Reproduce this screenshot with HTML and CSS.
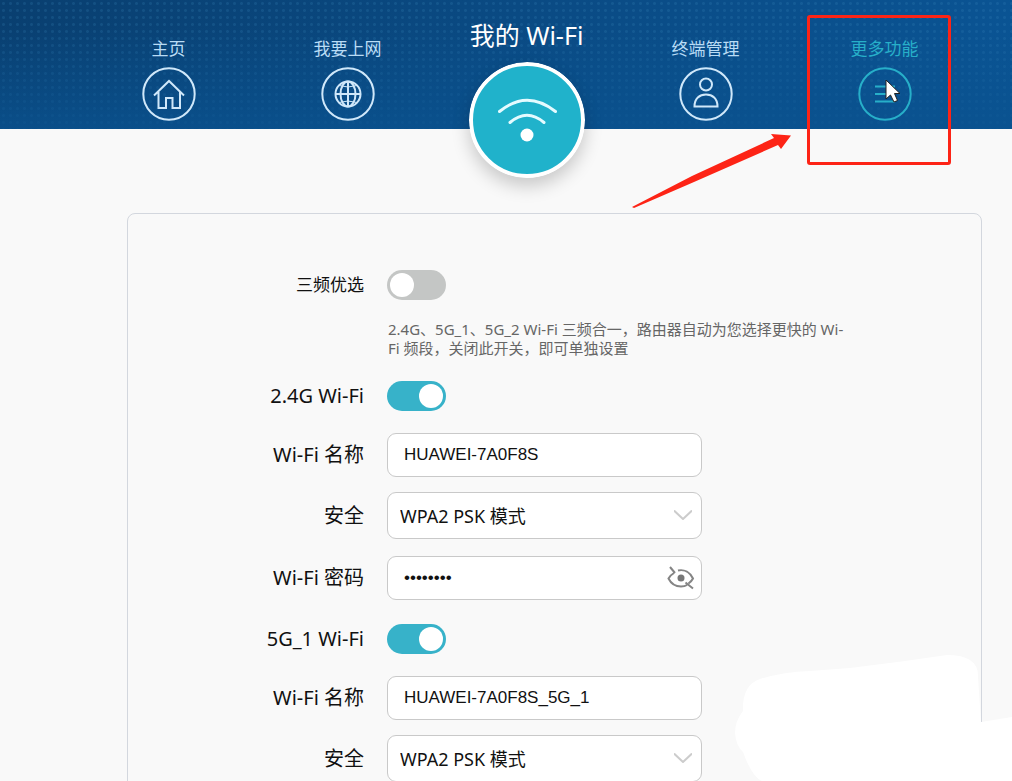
FILE: index.html
```html
<!DOCTYPE html>
<html lang="zh-CN">

<head>
    <meta charset="UTF-8">
    <meta name="viewport" content="width=device-width, initial-scale=1.0">
    <title>我的 Wi-Fi</title>
    <link rel="stylesheet" href="styles.css">
</head>

<body>
    <header class="header">
        <nav class="nav">
            <a class="nav-item" href="#">
                <span>主页</span>
                <svg class="nav-icon" viewBox="0 0 54 54">
                    <circle cx="27" cy="27" r="25.7" />
                    <path d="M12 28.5 27 14l15 14.5M16.500 25v16h7.500v-10h6.500v10h7.500v-16" />
                </svg>
            </a>
            <a class="nav-item" href="#">
                <span>我要上网</span>
                <svg class="nav-icon" viewBox="0 0 54 54">
                    <circle cx="27" cy="27" r="25.7" />
                    <circle cx="27" cy="27" r="12.500" />
                    <ellipse cx="27" cy="27" rx="7.500" ry="12.500" />
                    <path d="M27 14.500v25M14.500 27h25" />
                    <path class="thin" d="M18 18.500q9 3 18 0M18 35.500q9-3 18 0" />
                </svg>
            </a>
            <a class="nav-item active" href="#">
                <span>我的 Wi-Fi</span>
                <svg class="wifi-icon" viewBox="0 0 116 116">
                    <circle class="disc" cx="58" cy="58" r="56" />
                    <path d="M30.500 49.500Q58 27 86.500 49.500M41 60.500Q58 46 75 60.500" />
                    <circle class="dot" cx="58" cy="73" r="6.500" />
                </svg>
            </a>
            <a class="nav-item" href="#">
                <span>终端管理</span>
                <svg class="nav-icon" viewBox="0 0 54 54">
                    <circle cx="27" cy="27" r="25.7" />
                    <circle cx="27" cy="17.500" r="6" />
                    <path d="M15.500 39.500c0-8 5-12 11.500-12s11.500 4 11.500 12z" />
                </svg>
            </a>
            <a class="nav-item more" href="#">
                <span>更多功能</span>
                <svg class="nav-icon" viewBox="0 0 54 54">
                    <circle cx="27" cy="27" r="25.7" />
                    <path d="M17 19.500h20M17 27h20M17 34.500h20" />
                </svg>
                <svg class="cursor" viewBox="0 0 16 24">
                    <path d="M1 1v19l4.500-4 3.500 7 3.500-1.500-3-7h5.500z" />
                </svg>
                <i class="mark"></i>
            </a>
        </nav>
        <svg class="arrow" viewBox="0 0 160 76">
            <path d="M0 75 60 44 142 6 139 2l20 1.500L149 17l-3-4L62 50 2 76z" />
        </svg>
    </header>

    <main class="panel">
        <form class="wifi-form">
            <div class="row">
                <label class="small" for="tri">三频优选</label>
                <input class="switch" type="checkbox" id="tri">
            </div>
            <p class="hint">2.4G、5G_1、5G_2 Wi-Fi 三频合一，路由器自动为您选择更快的 Wi-Fi 频段，关闭此开关，即可单独设置</p>

            <div class="row">
                <label for="on24">2.4G Wi-Fi</label>
                <input class="switch" type="checkbox" id="on24" checked>
            </div>
            <div class="row name">
                <label for="name24">Wi-Fi 名称</label>
                <input class="box" type="text" id="name24" value="HUAWEI-7A0F8S">
            </div>
            <div class="row safe">
                <label for="safe24">安全</label>
                <div class="field">
                    <select class="box" id="safe24">
                        <option>WPA2 PSK 模式</option>
                    </select>
                    <svg class="chevron" viewBox="0 0 18 10">
                        <path d="M0 .500l9 8.500 9-8.500" />
                    </svg>
                </div>
            </div>
            <div class="row pass">
                <label for="pass24">Wi-Fi 密码</label>
                <div class="field">
                    <input class="box" type="password" id="pass24" value="12345678">
                    <button class="eye" type="button" aria-label="显示密码">
                        <svg viewBox="0 0 28 24">
                            <path d="M3 1l5 6M7 7C4.500 8.500 2.500 10.500 1.500 12.500 4 17.500 9 20.500 14 20.500c2.500 0 4.500-.500 6-1.500M11 4.500c6.500-1.500 12 2 15 8-1 2-2.500 3.500-4.500 5M18.500 16.500l7.500 6" />
                            <circle cx="14" cy="12" r="3.500" />
                        </svg>
                    </button>
                </div>
            </div>

            <div class="row band">
                <label for="on5">5G_1 Wi-Fi</label>
                <input class="switch" type="checkbox" id="on5" checked>
            </div>
            <div class="row name">
                <label for="name5">Wi-Fi 名称</label>
                <input class="box" type="text" id="name5" value="HUAWEI-7A0F8S_5G_1">
            </div>
            <div class="row safe">
                <label for="safe5">安全</label>
                <div class="field">
                    <select class="box" id="safe5">
                        <option>WPA2 PSK 模式</option>
                    </select>
                    <svg class="chevron" viewBox="0 0 18 10">
                        <path d="M0 .500l9 8.500 9-8.500" />
                    </svg>
                </div>
            </div>
        </form>
    </main>

    <svg class="patch" viewBox="0 0 277 126">
        <path d="M0 78Q0 66 8 56 7 30 25 24 48 17 75 16L115 13Q165 7 212 0 244 0 243 22L246 67 277 62V126H27Q17 122 8 97 1 91 0 78z" />
    </svg>
</body>

</html>
```
FILE: styles.css
```css
* {
    box-sizing: border-box;
}

body {
    margin: 0;
    height: 100vh;
    overflow: hidden;
    position: relative;
    background-color: #f9f9f9;
    color: #111;
    font-family: "Noto Sans", "Noto Sans CJK SC", sans-serif;
}

/* top navigation */
.header {
    position: relative;
    height: 129px;
    padding: 0 38px 0 79px;
    background-image:
        linear-gradient(180deg, transparent 20%, rgba(10, 82, 143, 0.8) 100%),
        radial-gradient(circle, rgba(60, 140, 190, 0.2) 1px, transparent 2px),
        linear-gradient(100deg, #093f70 0%, #0a4a83 50%, #0a5494 100%);
    background-size: 100% 100%, 7px 7px, 100% 100%;
}

.nav {
    display: grid;
    grid-template-columns: repeat(5, 1fr);
}

.nav-item {
    position: relative;
    display: flex;
    flex-direction: column;
    align-items: center;
    padding-top: 37px;
    gap: 6px;
    color: #b9dcf5;
    font-size: 17px;
    line-height: 24px;
    text-decoration: none;
}

.nav-icon {
    width: 54px;
    height: 54px;
    fill: none;
    stroke: #d0e8fa;
    stroke-width: 2;
}

.thin {
    stroke-width: 1;
}

.active {
    padding-top: 18px;
    gap: 10px;
    color: #fff;
    font-size: 25px;
    line-height: 34px;
}

.wifi-icon {
    width: 116px;
    height: 116px;
    border-radius: 50%;
    box-shadow: 0 8px 18px rgba(0, 0, 0, 0.2);
    fill: none;
    stroke: #e4fbff;
    stroke-width: 3;
    stroke-linecap: round;
}

.disc {
    fill: #20b2cb;
    stroke: #fff;
    stroke-width: 4;
}

.dot {
    fill: #fff;
    stroke: none;
}

.more {
    color: #27afc9;
}

.more .nav-icon {
    stroke: #27afc9;
}

.cursor {
    position: absolute;
    left: 90px;
    top: 79px;
    width: 16px;
    height: 24px;
    fill: #fff;
    stroke: #222;
}

.mark {
    position: absolute;
    left: 12px;
    top: 15px;
    width: 144px;
    height: 150px;
    border: 3px solid #fd2416;
    border-radius: 3px;
}

.arrow {
    position: absolute;
    right: 220px;
    top: 132px;
    width: 160px;
    height: 76px;
    fill: #fd2416;
}

/* settings */
.panel {
    margin: 84px 30px 0 127px;
    padding: 56px 20px 60px 0;
    border: 1px solid #d3d7de;
    border-radius: 8px;
}

.row {
    display: grid;
    grid-template-columns: 236px 315px;
    column-gap: 23px;
    align-items: center;
}

.row label {
    font-size: 20px;
    line-height: 28px;
    text-align: right;
}

.row .small {
    font-size: 17px;
}

.hint {
    width: 460px;
    margin: 20px 0 23px 260px;
    color: #666;
    font-size: 15px;
    line-height: 19px;
}

.name {
    margin-top: 22px;
}

.safe {
    margin-top: 15px;
}

.pass {
    margin-top: 17px;
}

.band {
    margin-top: 24px;
}

.switch {
    appearance: none;
    display: flex;
    align-items: center;
    width: 59px;
    height: 30px;
    margin: 0;
    padding: 3px;
    border-radius: 15px;
    background-color: #c4c6c5;
}

.switch::before {
    content: "";
    width: 24px;
    height: 24px;
    border-radius: 50%;
    background-color: #fff;
}

.switch:checked {
    justify-content: flex-end;
    background-color: #37b2c9;
}

.field {
    position: relative;
}

.box {
    display: block;
    width: 100%;
    height: 44px;
    padding: 0 16px;
    border: 1px solid #c9c9c9;
    border-radius: 9px;
    background-color: #fff;
    color: #111;
    font-family: "Liberation Sans", sans-serif;
    font-size: 17px;
}

select.box {
    appearance: none;
    height: 47px;
    padding: 0 12px;
    font-family: "Noto Sans", "Noto Sans CJK SC", sans-serif;
    font-size: 18px;
}

.chevron {
    position: absolute;
    right: 10px;
    top: 18px;
    width: 18px;
    height: 10px;
    fill: none;
    stroke: #ccc;
    stroke-width: 2;
    pointer-events: none;
}

.eye {
    position: absolute;
    right: 7px;
    top: 10px;
    padding: 0;
    border: 0;
    background: none;
}

.eye svg {
    display: block;
    width: 28px;
    height: 24px;
    fill: none;
    stroke: #858585;
    stroke-width: 2;
}

.eye circle {
    fill: #777;
    stroke: none;
}

.patch {
    position: absolute;
    right: 0;
    bottom: 0;
    width: 277px;
    height: 126px;
    fill: #fff;
}
```
